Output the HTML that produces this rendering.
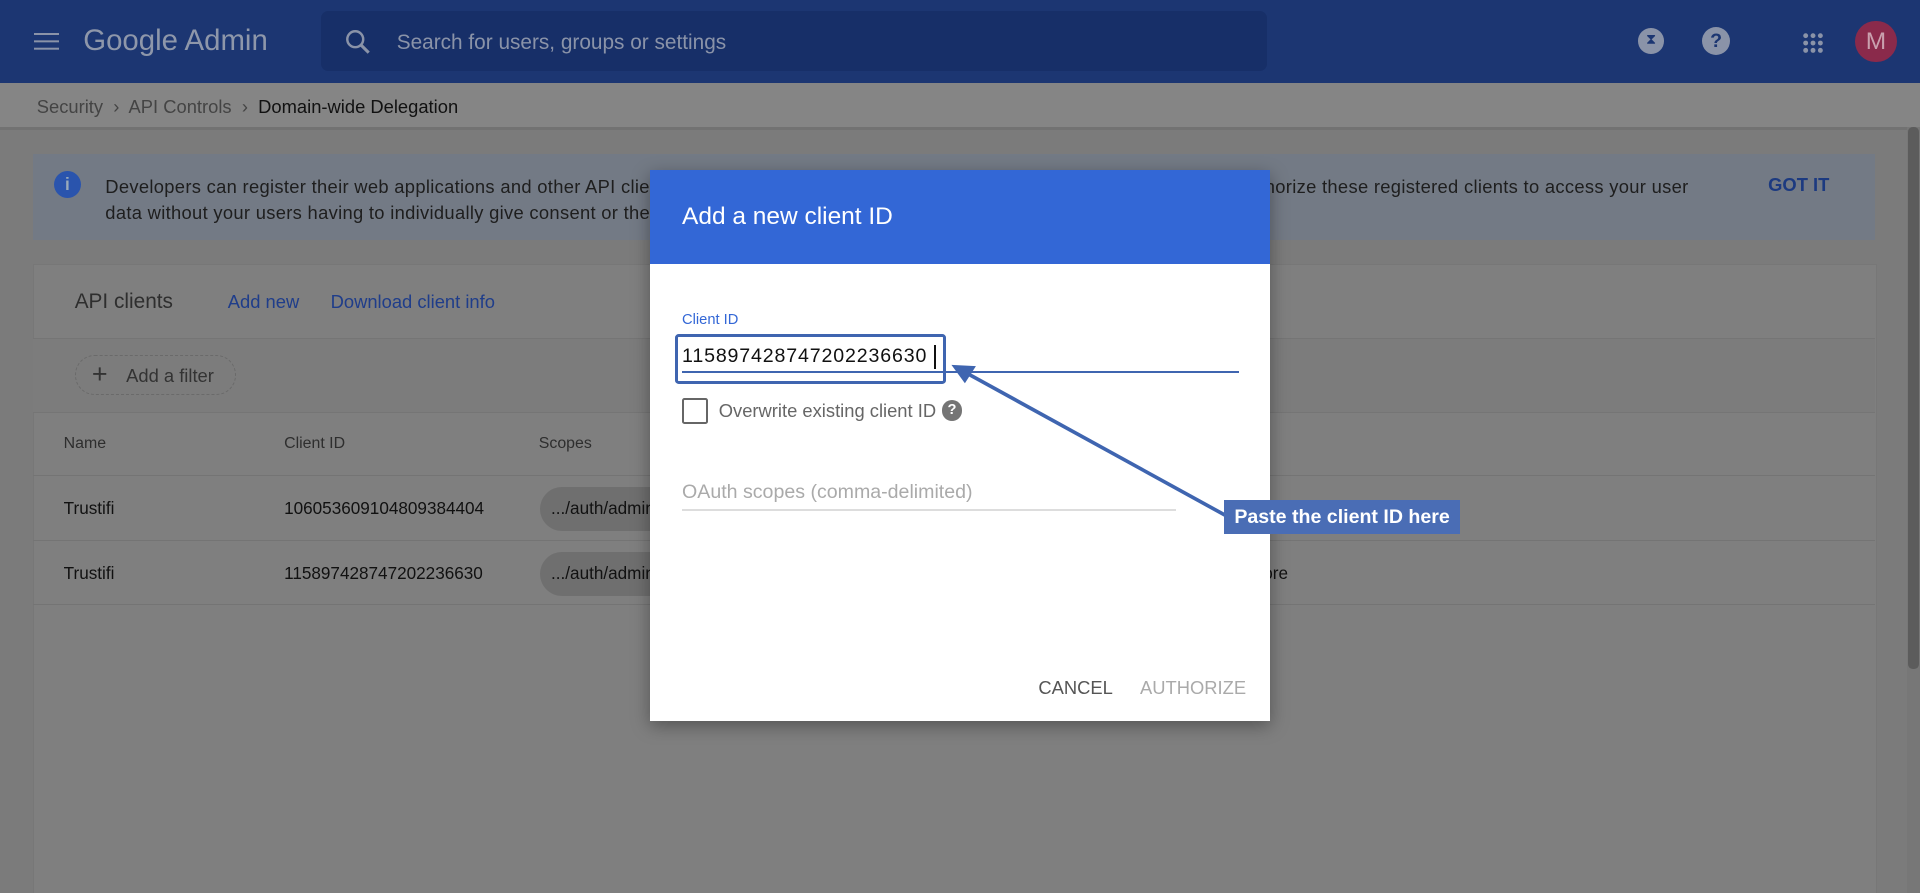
<!DOCTYPE html>
<html><head><meta charset="utf-8"><style>
html,body{margin:0;padding:0;overflow:hidden}
body{width:1920px;height:893px;background:#7a7a7a;font-family:"Liberation Sans",Arial,sans-serif}
#w{position:absolute;left:0;top:0;width:1568px;height:729px;zoom:1.2244898;background:#7b7b7b;overflow:hidden}
.a{position:absolute;white-space:nowrap}
</style></head><body><div id="w">
<div class="a" style="left:0;top:0;width:1568px;height:68px;background:#1c3672"></div>
<div class="a" style="left:28px;top:27px;width:20px;height:2px;background:#8a93a8;box-shadow:0 6px 0 #8a93a8,0 12px 0 #8a93a8"></div>
<div class="a" style="left:68px;top:20px;font-size:24px;color:#8e97aa">Google Admin</div>
<div class="a" style="left:262px;top:9px;width:773px;height:49px;background:#172f68;border-radius:6px"></div>
<svg class="a" style="left:280px;top:22px" width="24" height="24"><circle cx="10" cy="10" r="6.5" fill="none" stroke="#8a93a8" stroke-width="2"/><line x1="15" y1="15" x2="21" y2="21" stroke="#8a93a8" stroke-width="2.5"/></svg>
<div class="a" style="left:324px;top:25px;font-size:17px;color:#8a93a8">Search for users, groups or settings</div>
<div class="a" style="left:1338px;top:23px;width:21px;height:21px;border-radius:50%;background:#8a93a8;color:#1c3672;font-size:12px;text-align:center;line-height:21px">⧗</div>
<div class="a" style="left:1390px;top:22px;width:23px;height:23px;border-radius:50%;background:#8a93a8;color:#1c3672;font-size:16px;font-weight:bold;text-align:center;line-height:23px">?</div>
<svg class="a" style="left:1472px;top:26px" width="18" height="18" fill="#8a93a8"><circle cx="3" cy="3" r="2"/><circle cx="9" cy="3" r="2"/><circle cx="15" cy="3" r="2"/><circle cx="3" cy="9" r="2"/><circle cx="9" cy="9" r="2"/><circle cx="15" cy="9" r="2"/><circle cx="3" cy="15" r="2"/><circle cx="9" cy="15" r="2"/><circle cx="15" cy="15" r="2"/></svg>
<div class="a" style="left:1515px;top:17px;width:34px;height:34px;border-radius:50%;background:#8a2a4b;color:#c9a0ae;font-size:20px;text-align:center;line-height:34px">M</div>
<div class="a" style="left:0;top:68px;width:1568px;height:36px;background:#858585"></div>
<div class="a" style="left:30px;top:78px;font-size:15px;color:#444">Security &nbsp;›&nbsp; API Controls &nbsp;›&nbsp; <span style="color:#111">Domain-wide Delegation</span></div>
<div class="a" style="left:0;top:104px;width:1568px;height:2px;background:#727272"></div>
<div class="a" style="left:27px;top:126px;width:1504px;height:70px;background:#737a85"></div>
<div class="a" style="left:44px;top:140px;width:22px;height:22px;border-radius:50%;background:#2a54ad;color:#9ab;font-size:14px;font-weight:bold;text-align:center;line-height:22px">i</div>
<div class="a" style="left:86px;top:142px;font-size:15px;line-height:21px;color:#1e1e1e;letter-spacing:0.25px">Developers can register their web applications and other API clients with Google to enable access to data in Google services. You can authorize these registered clients to access your user<br>data without your users having to individually give consent or their passwords.</div>
<div class="a" style="left:1444px;top:142px;font-size:15px;color:#1c3a80;font-weight:bold">GOT IT</div>
<div class="a" style="left:27px;top:216px;width:1504px;height:513px;background:#7f7f7f;border:1px solid #777"></div>
<div class="a" style="left:27px;top:276px;width:1504px;height:60px;background:#7c7c7c;border-top:1px solid #757575;border-bottom:1px solid #757575"></div>
<div class="a" style="left:61px;top:237px;font-size:17px;color:#2e2e2e">API clients</div>
<div class="a" style="left:186px;top:238px;font-size:15px;color:#1f3d8a">Add new</div>
<div class="a" style="left:270px;top:238px;font-size:15px;color:#1f3d8a">Download client info</div>
<div class="a" style="left:61px;top:290px;width:130px;height:31px;border:1px dashed #6a6a6a;border-radius:16px"></div>
<div class="a" style="left:75px;top:293px;font-size:22px;color:#333">+</div>
<div class="a" style="left:103px;top:298px;font-size:15px;color:#333">Add a filter</div>
<div class="a" style="left:52px;top:355px;font-size:13px;color:#2e2e2e">Name</div>
<div class="a" style="left:232px;top:355px;font-size:13px;color:#2e2e2e">Client ID</div>
<div class="a" style="left:440px;top:355px;font-size:13px;color:#2e2e2e">Scopes</div>
<div class="a" style="left:27px;top:388px;width:1504px;height:1px;background:#747474"></div>
<div class="a" style="left:27px;top:441px;width:1504px;height:1px;background:#747474"></div>
<div class="a" style="left:27px;top:493px;width:1504px;height:1px;background:#747474"></div>
<div class="a" style="left:52px;top:407px;font-size:14px;color:#111">Trustifi</div>
<div class="a" style="left:232px;top:407px;font-size:14px;color:#111">106053609104809384404</div>
<div class="a" style="left:441px;top:398px;width:120px;height:36px;border-radius:18px;background:#6f6f6f"></div>
<div class="a" style="left:450px;top:407px;font-size:14px;color:#111">.../auth/admin</div>
<div class="a" style="left:52px;top:460px;font-size:14px;color:#111">Trustifi</div>
<div class="a" style="left:232px;top:460px;font-size:14px;color:#111">115897428747202236630</div>
<div class="a" style="left:441px;top:451px;width:120px;height:36px;border-radius:18px;background:#6f6f6f"></div>
<div class="a" style="left:450px;top:460px;font-size:14px;color:#111">.../auth/admin</div>
<div class="a" style="left:1020px;top:460px;font-size:14px;color:#111">More</div>
<div class="a" style="left:1557px;top:104px;width:11px;height:625px;background:#777"></div>
<div class="a" style="left:1558px;top:104px;width:9px;height:442px;background:#5c5c5c;border-radius:4px"></div>
<div class="a" style="left:531px;top:139px;width:506px;height:450px;background:#fff;box-shadow:0 4px 14px rgba(0,0,0,.35)"></div>
<div class="a" style="left:531px;top:139px;width:506px;height:77px;background:#3367d6"></div>
<div class="a" style="left:557px;top:166px;font-size:20px;color:#fff">Add a new client ID</div>
<div class="a" style="left:557px;top:255px;font-size:12px;color:#3367d6">Client ID</div>
<div class="a" style="left:557px;top:282px;font-size:16px;color:#111;letter-spacing:0.7px">115897428747202236630</div>
<div class="a" style="left:763px;top:282px;width:1px;height:19px;background:#111"></div>
<div class="a" style="left:557px;top:303px;width:455px;height:2px;background:#3f65b0"></div>
<div class="a" style="left:551px;top:273px;width:217px;height:36px;border:3px solid #3f65b0;border-radius:3px"></div>
<div class="a" style="left:557px;top:325px;width:18px;height:18px;border:2px solid #666;border-radius:2px"></div>
<div class="a" style="left:587px;top:327px;font-size:15px;color:#666">Overwrite existing client ID</div>
<div class="a" style="left:769px;top:327px;width:17px;height:17px;border-radius:50%;background:#757575;color:#fff;font-size:12px;font-weight:bold;text-align:center;line-height:17px">?</div>
<div class="a" style="left:557px;top:393px;font-size:16px;color:#aaa">OAuth scopes (comma-delimited)</div>
<div class="a" style="left:557px;top:416px;width:403px;height:1px;background:#ddd"></div>
<div class="a" style="left:848px;top:553px;font-size:15px;color:#555">CANCEL</div>
<div class="a" style="left:931px;top:553px;font-size:15px;color:#aaa">AUTHORIZE</div>
<svg class="a" style="left:0;top:0" width="1568" height="729"><line x1="1001" y1="421" x2="790" y2="305" stroke="#3f65b0" stroke-width="3"/><polygon points="777,298 797,299 788,313" fill="#3f65b0"/></svg>
<div class="a" style="left:1000px;top:408px;width:192px;height:28px;background:#4a6db5;color:#fff;font-size:16px;font-weight:bold;line-height:28px;text-align:center">Paste the client ID here</div>
</div></body></html>
